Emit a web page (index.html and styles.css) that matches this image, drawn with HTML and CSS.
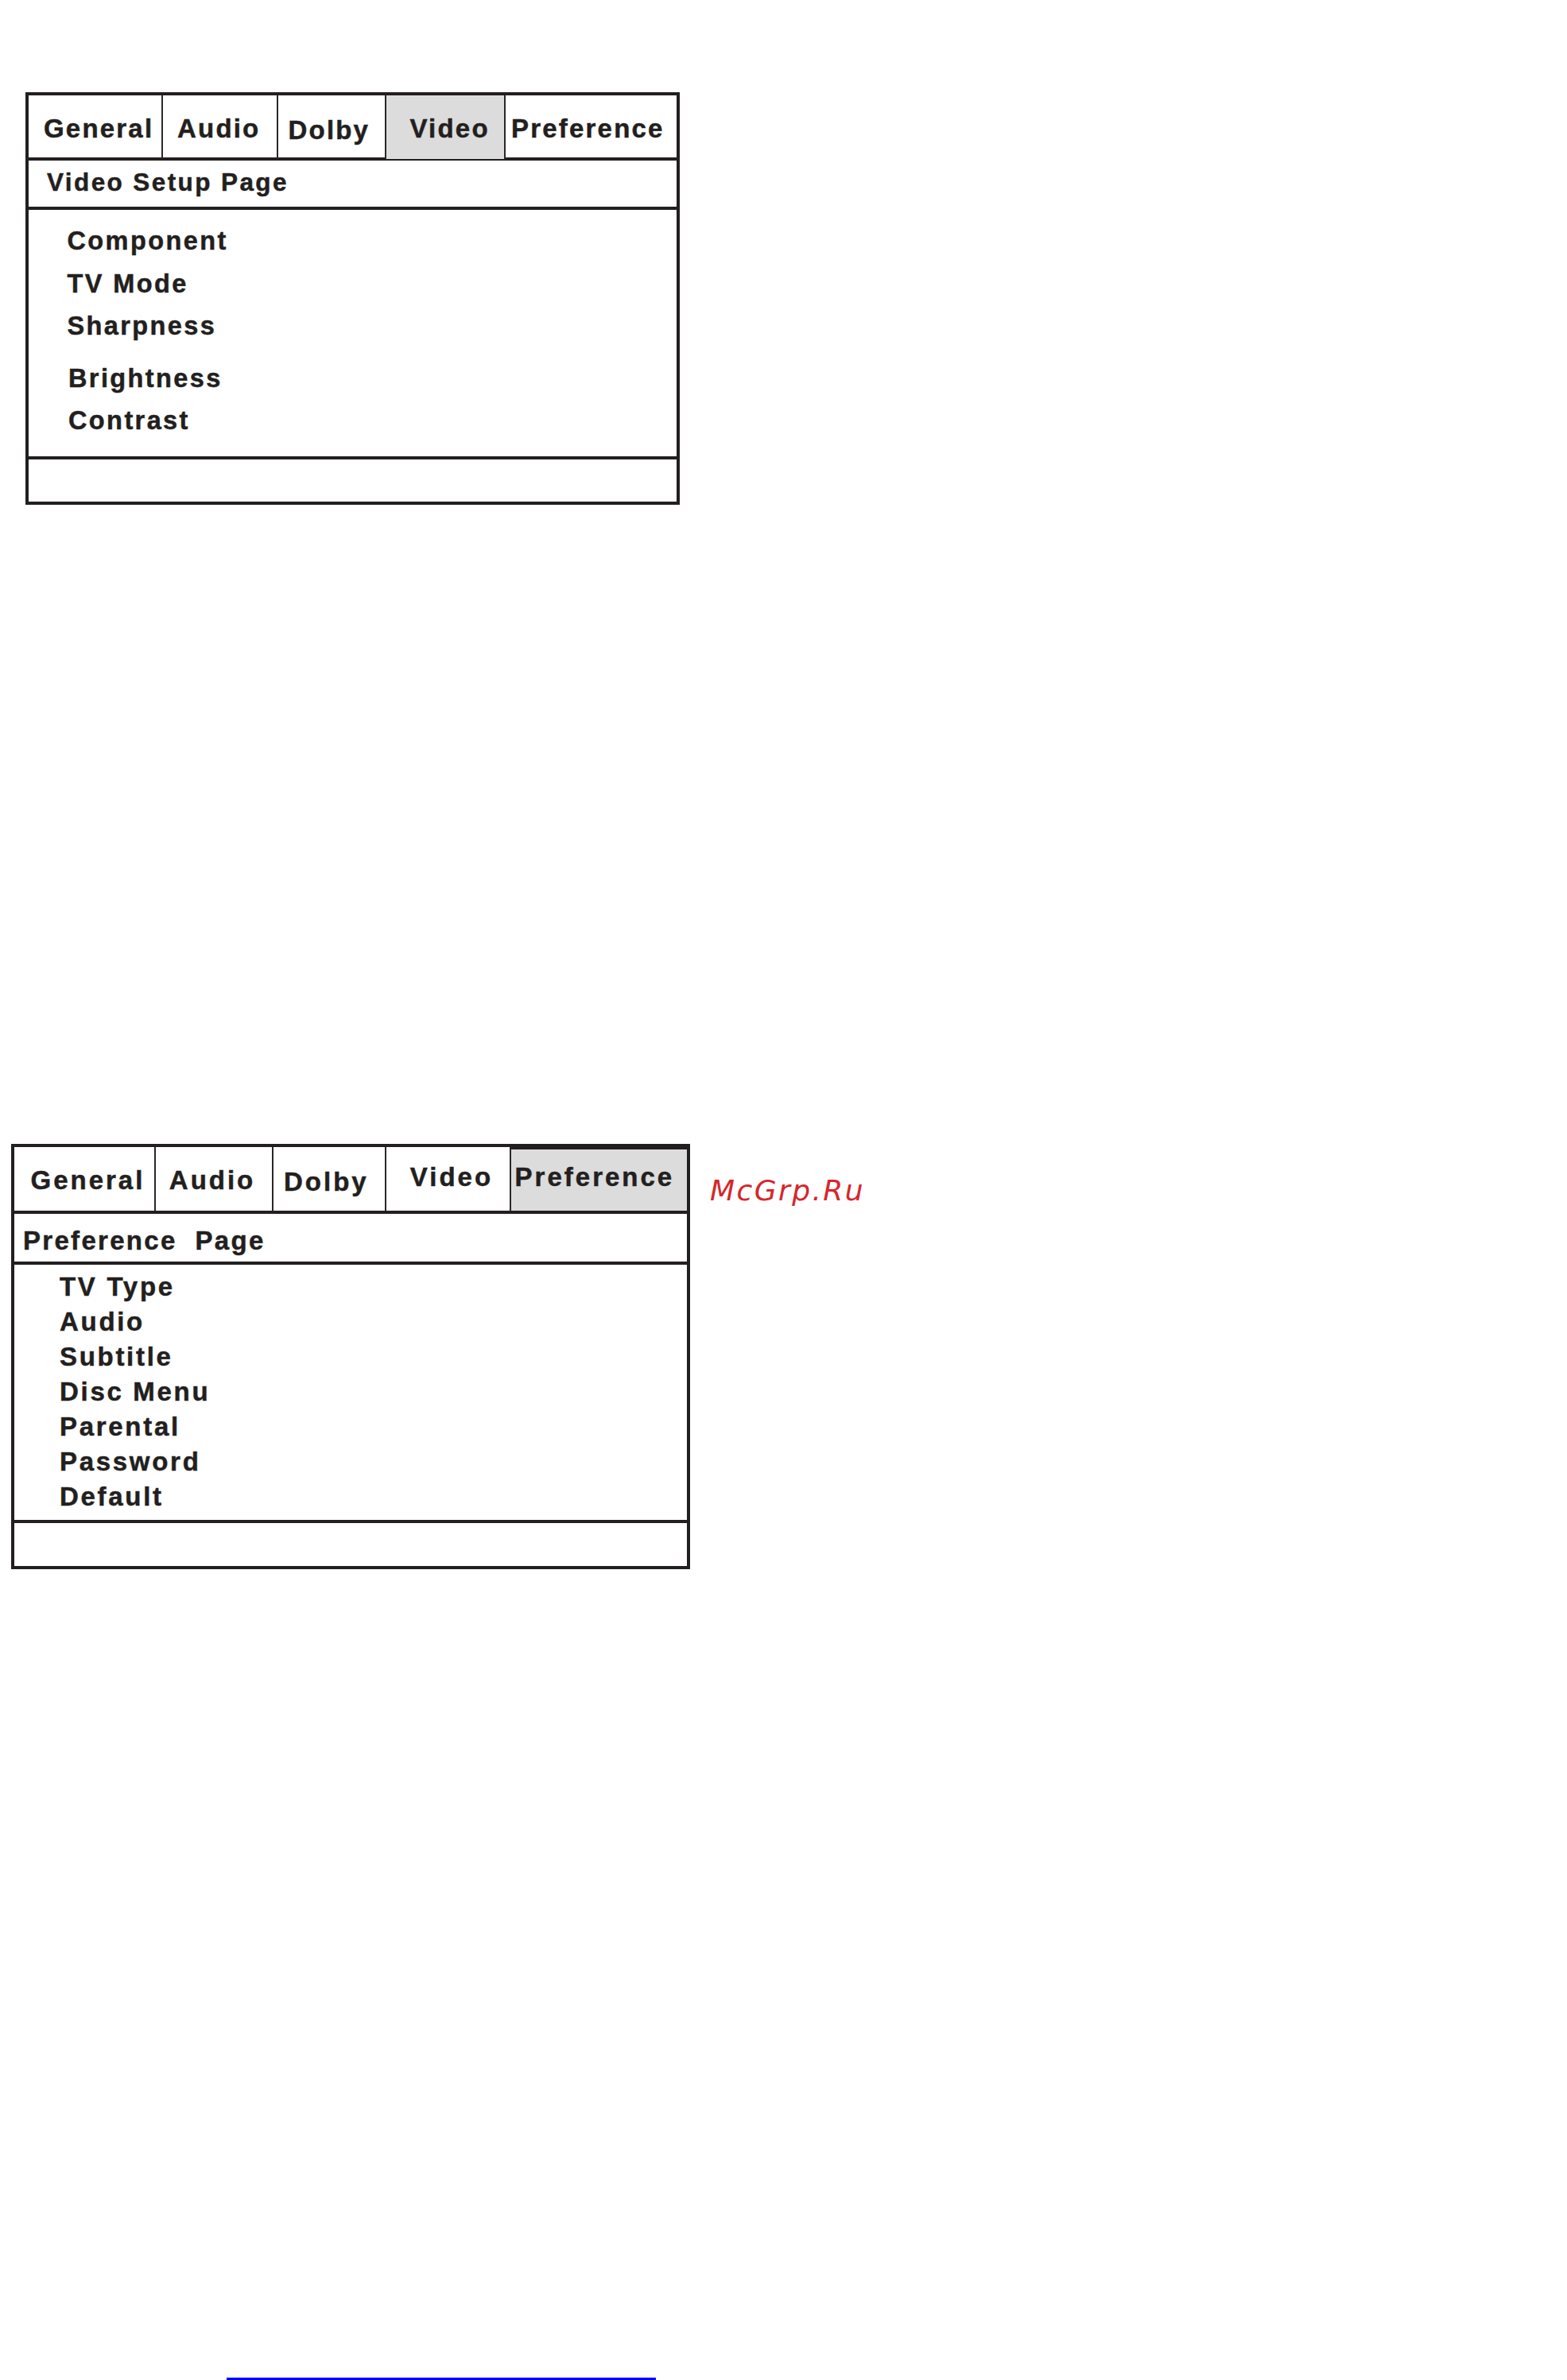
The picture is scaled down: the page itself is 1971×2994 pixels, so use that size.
FILE: index.html
```html
<!DOCTYPE html>
<html lang="en">
<head>
<meta charset="utf-8">
<title>Setup Menu</title>
<link rel="stylesheet" href="styles.css">
</head>
<body>
<div class="page">
  <section class="osd osd-video">
    <div class="tabs">
      <div class="tab tab-general">General</div>
      <div class="tab tab-audio">Audio</div>
      <div class="tab tab-dolby">Dolby</div>
      <div class="tab tab-video is-active">Video</div>
      <div class="tab tab-pref">Preference</div>
    </div>
    <div class="title">Video Setup Page</div>
    <ul class="items">
      <li>Component</li>
      <li>TV Mode</li>
      <li>Sharpness</li>
      <li class="gap">Brightness</li>
      <li class="gap-after">Contrast</li>
    </ul>
    <div class="footer"></div>
  </section>

  <div class="row">
    <section class="osd osd-pref">
      <div class="tabs">
        <div class="tab tab-general">General</div>
        <div class="tab tab-audio">Audio</div>
        <div class="tab tab-dolby">Dolby</div>
        <div class="tab tab-video">Video</div>
        <div class="tab tab-pref is-active">Preference</div>
      </div>
      <div class="title">Preference&nbsp; Page</div>
      <ul class="items">
        <li>TV Type</li>
        <li>Audio</li>
        <li>Subtitle</li>
        <li>Disc Menu</li>
        <li>Parental</li>
        <li>Password</li>
        <li>Default</li>
      </ul>
      <div class="footer"></div>
    </section>
    <div class="mark">McGrp.Ru</div>
  </div>

  <div class="rule"></div>
</div>
</body>
</html>
```

FILE: styles.css
```css
html, body {
  margin: 0;
  padding: 0;
  background: #ffffff;
}

body {
  font-family: "Liberation Sans", Arial, sans-serif;
  color: #231f20;
  overflow: hidden;
}

.page {
  display: flex;
  flex-direction: column;
  align-items: flex-start;
  padding-top: 116px;
}

/* ---------- OSD box ---------- */
.osd {
  box-sizing: border-box;
  border: 4px solid #231f20;
  display: flex;
  flex-direction: column;
  font-weight: 700;
  background: #ffffff;
  -webkit-text-stroke: 0.5px #231f20;
}

.tabs {
  display: grid;
  box-sizing: border-box;
  border-bottom: 4px solid #231f20;
}

.tab {
  box-sizing: border-box;
  border-right: 2px solid #2b2728;
  white-space: nowrap;
  padding-top: 5px;
  line-height: 73px;
  font-size: 33px;
}

.tab:last-child {
  border-right: none;
}

.tab.is-active {
  background: #dcdcdc;
}

.title {
  box-sizing: border-box;
  border-bottom: 4px solid #231f20;
  white-space: nowrap;
}

.items {
  list-style: none;
  margin: 0;
  box-sizing: border-box;
  border-bottom: 4px solid #231f20;
}

.items li {
  white-space: nowrap;
}

/* ---------- first box: video setup ---------- */
.osd-video {
  margin-left: 32px;
  width: 823px;
  height: 519px;
}

.osd-video .tabs {
  height: 82px;
  grid-template-columns: 169px 145px 136px 150px 1fr;
}

.osd-video .tab {
  letter-spacing: 2.2px;
}

.osd-video .tab-general { padding-left: 19px; }
.osd-video .tab-audio { padding-left: 18px; }
.osd-video .tab-dolby { padding-left: 12.5px; padding-top: 7px; }
.osd-video .tab-video { padding-left: 29.5px; }
.osd-video .tab-pref { padding-left: 7px; }

.osd-video .title {
  height: 62px;
  padding-left: 23px;
  font-size: 31.5px;
  line-height: 54px;
  letter-spacing: 2.4px;
}

.osd-video .items {
  height: 314px;
  padding: 13px 0 0 48.5px;
  font-size: 32.5px;
  line-height: 53.5px;
  letter-spacing: 2.4px;
}

.osd-video .items li.gap {
  margin-top: 12px;
}

.osd-video .items li.gap,
.osd-video .items li.gap-after {
  padding-left: 1.5px;
}

.osd-video .footer {
  height: 53px;
}

/* ---------- second row: preference ---------- */
.row {
  display: flex;
  align-items: flex-start;
  margin-top: 804px;
}

.osd-pref {
  margin-left: 14px;
  width: 854px;
  height: 535px;
}

.osd-pref .tabs {
  height: 84px;
  grid-template-columns: 178px 148px 142px 157px 1fr;
}

.osd-pref .tab {
  letter-spacing: 3px;
}

.osd-pref .tab-general { padding-left: 20.5px; }
.osd-pref .tab-audio { padding-left: 16.8px; }
.osd-pref .tab-dolby { padding-left: 13px; padding-top: 7px; }
.osd-pref .tab-video { padding-left: 29.8px; padding-top: 1px; }
.osd-pref .tab-pref {
  padding-left: 4.6px;
  padding-top: 0;
  border-top: 3px solid #231f20;
  line-height: 70px;
}

.osd-pref .title {
  height: 64px;
  padding: 7px 0 0 11px;
  font-size: 33px;
  line-height: 53px;
  letter-spacing: 2.3px;
}

.osd-pref .items {
  height: 325px;
  padding: 5.5px 0 0 57px;
  font-size: 33px;
  line-height: 44px;
  letter-spacing: 2.7px;
}

.osd-pref .footer {
  height: 54px;
}

.mark {
  margin-left: 25px;
  margin-top: 37.5px;
  font-family: "DejaVu Sans", "Liberation Sans", sans-serif;
  font-style: italic;
  font-weight: 400;
  font-size: 36px;
  line-height: 42px;
  letter-spacing: 2.4px;
  color: #d7262c;
  white-space: nowrap;
}

/* ---------- bottom blue rule ---------- */
.rule {
  margin-top: 1017px;
  margin-left: 285px;
  width: 540px;
  height: 3px;
  background: #0000ff;
}
```
